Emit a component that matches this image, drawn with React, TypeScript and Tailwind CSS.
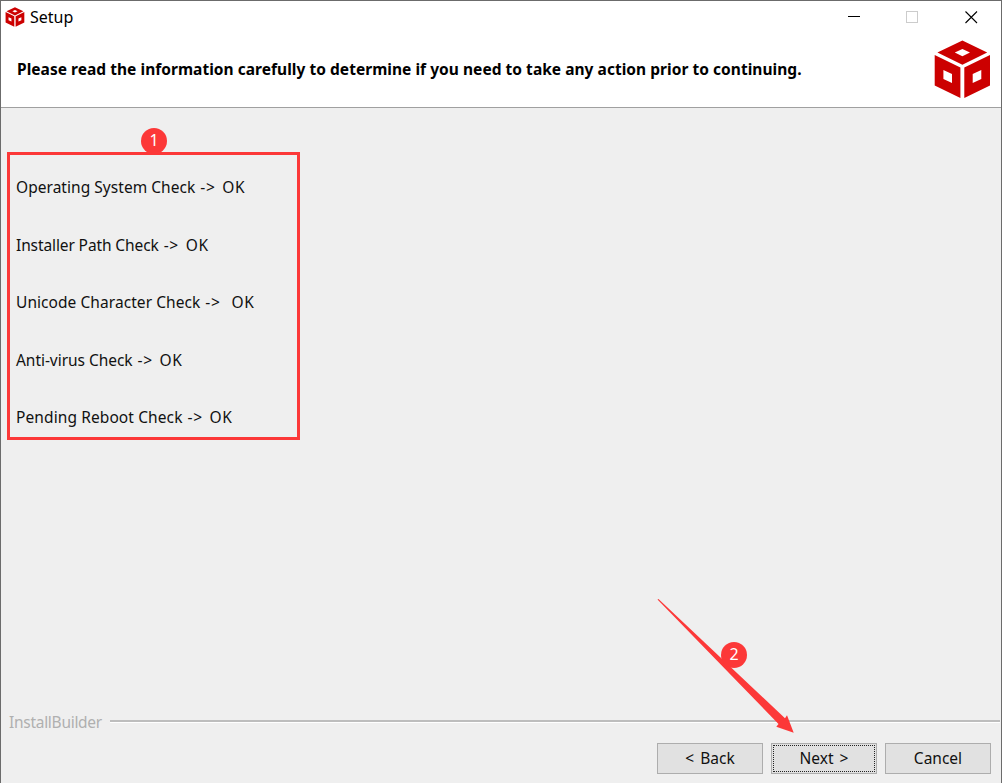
import type { ReactNode } from 'react';

const checks = [
  { label: 'Operating System Check', result: '-> OK', spacing: 'tracking-[0.04px]', gap: '[word-spacing:2px]' },
  { label: 'Installer Path Check', result: '-> OK', spacing: 'tracking-[-0.11px]', gap: '[word-spacing:2px]' },
  { label: 'Unicode Character Check', result: '->  OK', spacing: 'tracking-[0.06px]', gap: '[word-spacing:0.7px]' },
  { label: 'Anti-virus Check', result: '-> OK', spacing: 'tracking-[-0.04px]', gap: '[word-spacing:2px]' },
  { label: 'Pending Reboot Check', result: '-> OK', spacing: 'tracking-[0.1px]', gap: '[word-spacing:2px]' },
];

function CubeLogo({ className }: { className: string }) {
  return (
    <svg viewBox="0 0 57 59" className={className} fill="#cc0000" fillRule="evenodd">
      <path d="M28.4 .5 53.2 12.6 28.4 24.8 3.4 12.6ZM28.4 9 20.8 12.6 28.4 16.2 36 12.6Z" />
      <path d="M.7 15 26.4 27.6V58L.7 45.4ZM9.4 30V39L18 43V34Z" />
      <path d="M56 15 30.3 27.6V58L56 45.4ZM47.3 30V39L38.7 43V34Z" />
    </svg>
  );
}

function Marker({ children }: { children: ReactNode }) {
  return (
    <div className="flex h-[26px] w-[26px] items-center justify-center rounded-full bg-[#fc3838] pb-[3px] text-[16px] leading-none text-white">
      {children}
    </div>
  );
}

function DialogButton({ children, focused = false }: { children: ReactNode; focused?: boolean }) {
  return (
    <button className="h-[31px] w-[106px] border border-[#adadad] bg-[#e1e1e1] p-px [word-spacing:2px]">
      <span
        className={`flex h-full w-full items-center justify-center border border-dotted ${
          focused ? 'border-[#222]' : 'border-transparent'
        }`}
      >
        {children}
      </span>
    </button>
  );
}

export default function App() {
  return (
    <div className="relative flex h-[783px] w-[1002px] flex-col overflow-hidden border-x border-t border-[#6b6b6b] bg-[#efefef] font-['Noto_Sans','Open_Sans',sans-serif] text-[15.5px] text-[#111]">
      {/* Title bar */}
      <div className="flex h-8 shrink-0 items-center justify-between bg-white pl-1">
        <div className="flex items-center gap-[5px]">
          <CubeLogo className="h-5 w-5" />
          <span className="text-[16px] text-black">Setup</span>
        </div>
        <div className="flex items-center gap-[46px] pr-[23px]">
          <svg width="13" height="13" className="text-black" shapeRendering="crispEdges">
            <path d="M1 5.5H13" stroke="currentColor" />
          </svg>
          <svg width="13" height="13" shapeRendering="crispEdges">
            <path d="M.5 .5H11.5V11.5H.5Z" stroke="#cccccc" fill="none" />
          </svg>
          <svg width="13" height="13">
            <path d="M.5 .5 12 12M12 .5 .5 12" stroke="#000" strokeWidth="1.1" />
          </svg>
        </div>
      </div>

      {/* Header */}
      <div className="flex h-[75px] shrink-0 justify-between border-b border-[#a0a0a0] bg-white pl-4 pr-[10px]">
        <h1 className="pt-6 text-[15.5px] leading-6 font-bold tracking-[0.035px] text-black">
          Please read the information carefully to determine if you need to take any action prior to continuing.
        </h1>
        <CubeLogo className="mt-[7px] h-[59px] w-[57px]" />
      </div>

      {/* Check results */}
      <div className="flex flex-1 flex-col pl-1.5 pt-5">
        <div className="ml-[134px]">
          <Marker>1</Marker>
        </div>
        <ul className="-mt-0.5 h-[288px] w-[293px] border-3 border-[#fc3838] pl-1.5 pt-1">
          {checks.map(({ label, result, spacing, gap }) => (
            <li key={label} className="flex h-[57.5px] items-center gap-[5px] whitespace-pre">
              <span className={spacing}>{label}</span>
              <span className={`tracking-[0.7px] ${gap}`}>{result}</span>
            </li>
          ))}
        </ul>
      </div>

      {/* Footer */}
      <div className="h-[73px] shrink-0">
        <div className="flex h-6 items-center pl-2 text-[#b0b0b0]">
          <span className="w-[101px] pt-0.5 tracking-[-0.28px]">InstallBuilder</span>
          <span className="mb-0.5 mr-px h-[3px] flex-1 border-t-2 border-b border-t-[#bdbdbd] border-b-white" />
        </div>
        <div className="flex justify-end gap-2 pt-[9px] pr-[10px]">
          <DialogButton>&lt; Back</DialogButton>
          <DialogButton focused>Next &gt;</DialogButton>
          <DialogButton>Cancel</DialogButton>
        </div>
      </div>

      {/* Arrow pointing at the Next button */}
      <svg viewBox="0 0 150 150" className="absolute top-[589px] left-[649px] h-[150px] w-[150px]" fill="#fc3838">
        <path d="M7.500 9.500 8.500 9 135 128.300 137 125.300 143.700 142.700 126.300 136.700 128.500 134Z" />
      </svg>
      <div className="absolute top-[641px] left-[720px]">
        <Marker>2</Marker>
      </div>
    </div>
  );
}
